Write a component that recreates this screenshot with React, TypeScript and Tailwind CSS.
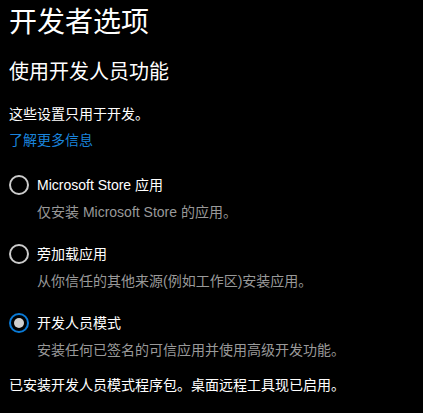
import React from "react";

const font = { fontFamily: '"Liberation Sans", "Noto Sans CJK SC", sans-serif' };

interface OptionProps {
  label: string;
  desc: string;
  checked?: boolean;
  className?: string;
}

const RadioOption = ({ label, desc, checked = false, className = "" }: OptionProps) => {
  return (
    <div className={className}>
      <div className="flex items-center gap-2 h-5">
        {checked ? (
          <span className="w-5 h-5 rounded-full border-2 border-[#0a7ad6] flex items-center justify-center">
            <span className="w-[10px] h-[10px] rounded-full bg-[#cfcfcf]" />
          </span>
        ) : (
          <span className="w-5 h-5 rounded-full border-2 border-[#cccccc]" />
        )}
        <span className="text-[14px] leading-5 text-white">{label}</span>
      </div>
      <div className="mt-[7px] pl-7 text-[14px] leading-5 text-[#999999]">{desc}</div>
    </div>
  );
};

export default function App() {
  return (
    <div className="w-[423px] h-[413px] bg-black pl-[9px] pt-[5px] overflow-hidden" style={font}>
      {/* HEADER */}
      <div className="text-[28px] leading-9 text-white">开发者选项</div>
      <div className="mt-[17px] text-[20px] leading-7 text-white">使用开发人员功能</div>
      <div className="mt-[18px] text-[14px] leading-5 text-white">这些设置只用于开发。</div>
      <div className="mt-[6px] text-[14px] leading-5 text-[#1a84dc]">了解更多信息</div>

      {/* OPTIONS */}
      <RadioOption
        className="mt-[25px]"
        label="Microsoft Store 应用"
        desc="仅安装 Microsoft Store 的应用。"
      />
      <RadioOption className="mt-[22px]" label="旁加载应用" desc="从你信任的其他来源(例如工作区)安装应用。" />
      <RadioOption
        className="mt-[22px]"
        label="开发人员模式"
        desc="安装任何已签名的可信应用并使用高级开发功能。"
        checked
      />

      {/* FOOTER */}
      <div className="mt-[15px] text-[14px] leading-5 text-white">
        已安装开发人员模式程序包。桌面远程工具现已启用。
      </div>
    </div>
  );
}
